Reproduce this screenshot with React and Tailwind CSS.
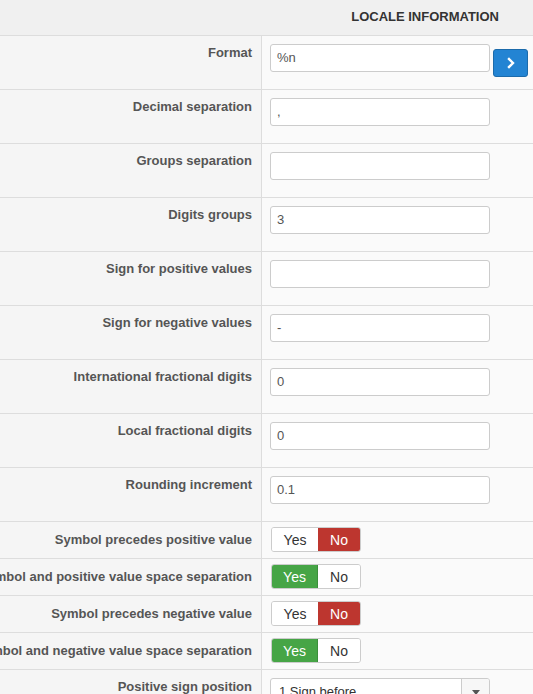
import React from "react";

const inputRows = [
  { label: "Format", value: "%n", button: true },
  { label: "Decimal separation", value: "," },
  { label: "Groups separation", value: "" },
  { label: "Digits groups", value: "3" },
  { label: "Sign for positive values", value: "" },
  { label: "Sign for negative values", value: "-" },
  { label: "International fractional digits", value: "0" },
  { label: "Local fractional digits", value: "0" },
  { label: "Rounding increment", value: "0.1" },
];

const toggleRows = [
  { label: "Symbol precedes positive value", yes: false },
  { label: "Symbol and positive value space separation", yes: true },
  { label: "Symbol precedes negative value", yes: false },
  { label: "Symbol and negative value space separation", yes: true },
];

function Label({ children, pt }) {
  return (
    <div
      className={`w-[262px] shrink-0 border-r border-[#dddddd] bg-[#f5f5f5] pr-[9px] text-right text-[13px] leading-[18px] font-bold text-[#555555] whitespace-nowrap flex justify-end ${pt}`}
    >
      <span>{children}</span>
    </div>
  );
}

function InputRow({ label, value, button }) {
  return (
    <div className="flex h-[54px] border-b border-[#dddddd]">
      <Label pt="pt-[8px]">{label}</Label>
      <div className="flex flex-1 items-start bg-[#fafafa] pl-[8px] pt-[8px]">
        <div className="flex h-[28px] w-[220px] items-center rounded-[3px] border border-[#cccccc] bg-white px-[6px] text-[13px] text-[#555555]">
          {value}
        </div>
        {button && (
          <div className="ml-[3px] mt-[5px] flex h-[28px] w-[35px] items-center justify-center rounded-[3px] border border-[#1c6bab] bg-[#2384d3]">
            <svg width="10" height="12" viewBox="0 0 10 12">
              <path d="M3 2 L7 6 L3 10" fill="none" stroke="white" strokeWidth="2.4" strokeLinecap="square" />
            </svg>
          </div>
        )}
      </div>
    </div>
  );
}

function ToggleRow({ label, yes }) {
  return (
    <div className="flex h-[37px] border-b border-[#dddddd]">
      <Label pt="pt-[9px]">{label}</Label>
      <div className="flex flex-1 items-start bg-[#fafafa] pl-[9px] pt-[5px]">
        <div className="flex h-[25px] overflow-hidden rounded-[3px] border border-[#cccccc] text-[14px] leading-none">
          <div
            className={`flex w-[46px] items-center justify-center ${
              yes ? "bg-[#46a546] text-white border-r border-[#3b8f3b]" : "bg-white text-[#333333]"
            }`}
          >
            Yes
          </div>
          <div
            className={`flex w-[42px] items-center justify-center ${
              yes ? "bg-white text-[#333333]" : "bg-[#bd362f] text-white"
            }`}
          >
            No
          </div>
        </div>
      </div>
    </div>
  );
}

export default function App() {
  return (
    <div
      className="w-[533px] h-[694px] overflow-hidden bg-white"
      style={{ fontFamily: '"Liberation Sans", Arial, sans-serif' }}
    >
      <div className="flex h-[36px] items-center justify-end border-b border-[#dddddd] bg-[#f0f0f0] pb-[2px] pr-[34px] text-[13px] font-bold text-[#333333]">
        LOCALE INFORMATION
      </div>
      {inputRows.map((r) => (
        <InputRow key={r.label} {...r} />
      ))}
      {toggleRows.map((r) => (
        <ToggleRow key={r.label} {...r} />
      ))}
      <div className="flex h-[54px] border-b border-[#dddddd]">
        <Label pt="pt-[8px]">Positive sign position</Label>
        <div className="flex flex-1 items-start bg-[#fafafa] pl-[8px] pt-[8px]">
          <div className="flex h-[28px] w-[220px] overflow-hidden rounded-[3px] border border-[#cccccc] bg-white text-[13px] text-[#333333]">
            <div className="flex flex-1 items-center px-[8px]">1.Sign before</div>
            <div className="flex w-[28px] items-center justify-center border-l border-[#cccccc] bg-[#f7f7f7]">
              <svg width="8" height="5" viewBox="0 0 8 5">
                <path d="M0 0 L8 0 L4 5 Z" fill="#555555" />
              </svg>
            </div>
          </div>
        </div>
      </div>
    </div>
  );
}
